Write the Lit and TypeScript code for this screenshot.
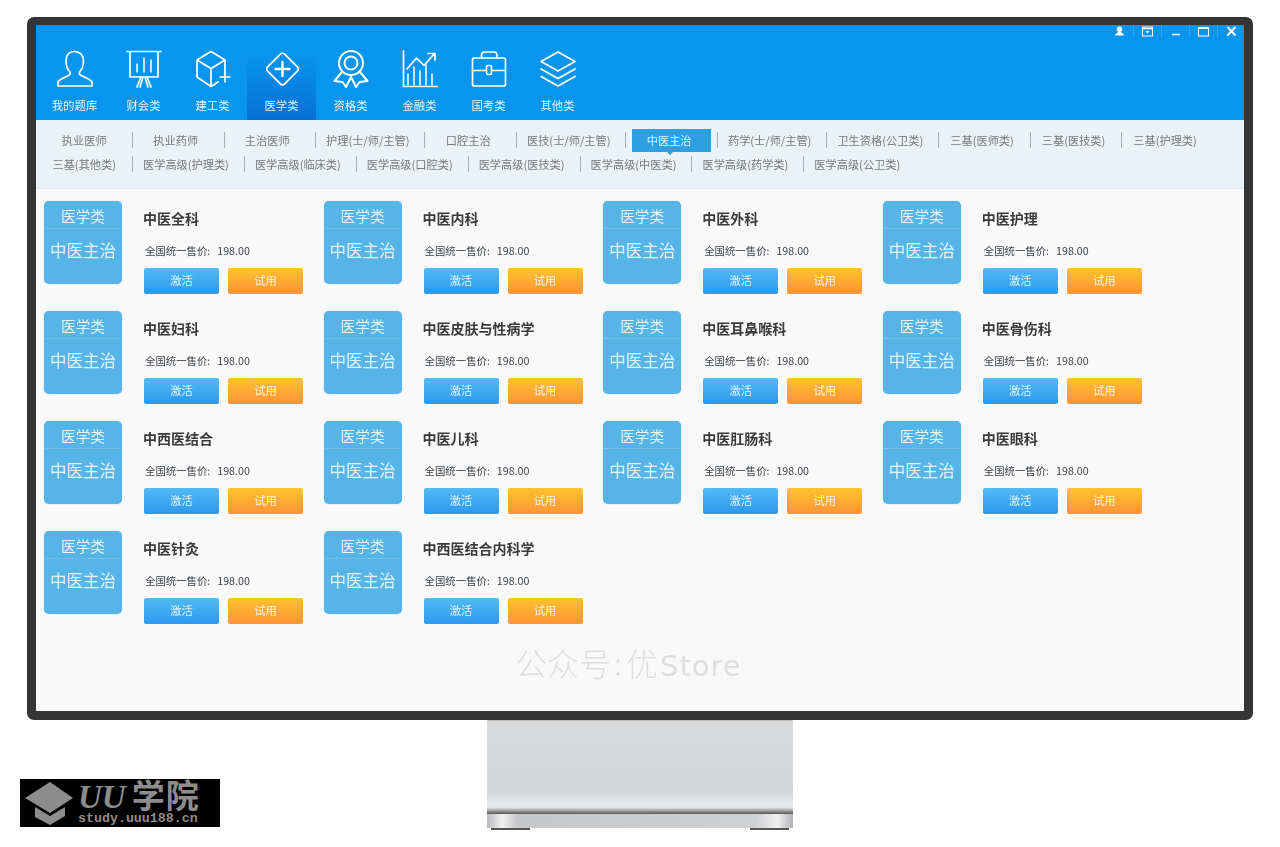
import { LitElement, html, css, svg } from "lit";
import { customElement } from "lit/decorators.js";

const s = (body: unknown) => html`<svg class="ico" viewBox="0 0 36 38" fill="none" stroke="#fff" stroke-width="1.7" stroke-linejoin="round" stroke-linecap="round">${body}</svg>`;

const NAV: [string, unknown][] = [
  ["我的题库", s(svg`<path d="M17.5 1.5C11.5 1.5 9 6 9 11C9 15.5 10.5 19.5 13 22V24C13 26 2.5 28.5 1 32V36H35V32C33.5 28.5 22.5 26 22.5 24V22C25 19.5 26.5 15.5 26.5 11C26.5 6 23.5 1.5 17.5 1.5Z"/>`)],
  ["财会类", s(svg`<path d="M1 1.5H35M4 1.5V27H32V1.5M15 27L11 37M21 27L25 37M19 27L22 37M17 27L14 37"/><path d="M11 14V22M18 8V22M25 10V22" stroke-width="1.5"/>`)],
  ["建工类", s(svg`<path d="M30 24V10L16 1.5L2 10V27L16 36.5L23 32M2 10L16 18.5L30 10M16 18.5V36"/><path d="M25 27H35M30 23V32" stroke-width="1.6"/>`)],
  ["医学类", s(svg`<rect x="6.5" y="7" width="24" height="24" rx="3" transform="rotate(45 18.5 19)"/><path d="M11.5 19H25.5M18.5 12V26" stroke-width="2.4"/>`)],
  ["资格类", s(svg`<circle cx="18" cy="13" r="12" stroke-width="2"/><circle cx="18" cy="13" r="6.5" stroke-width="2"/><path d="M9 22L1.5 31L9.5 32L13 37L18 27L23 37L26.5 32L34.5 31L27 22" stroke-width="2"/>`)],
  ["金融类", s(svg`<path d="M1.5 1V36.5H35"/><path d="M6 35V24M12 35V17M18 35V21M24 35V15M30 35V24" stroke-width="1.5"/><path d="M5 19L14.5 8L22 15.5L32 4M26 3.5H33V10"/>`)],
  ["国考类", s(svg`<rect x="1.5" y="8" width="33" height="28" rx="2"/><path d="M10.5 8V5C10.5 3 12 2 13.5 2H23C25 2 26 3 26 5V8M1.5 20.5H15M21 20.5H34.5"/><rect x="15.5" y="15.5" width="5" height="9" rx="1.5"/>`)],
  ["其他类", s(svg`<path d="M18 2L35 11.5L18 21L1 11.5Z"/><path d="M1 19L18 28.5L35 19M1 26.5L18 36L35 26.5" stroke-width="1.7"/>`)],
];

const SUB = [
  "执业医师", "执业药师", "主治医师", "护理(士/师/主管)", "口腔主治", "医技(士/师/主管)", "中医主治", "药学(士/师/主管)", "卫生资格(公卫类)", "三基(医师类)", "三基(医技类)", "三基(护理类)",
  "三基(其他类)", "医学高级(护理类)", "医学高级(临床类)", "医学高级(口腔类)", "医学高级(医技类)", "医学高级(中医类)", "医学高级(药学类)", "医学高级(公卫类)",
];
const LAST_IN_ROW = new Set(["三基(护理类)", "医学高级(公卫类)"]);

const COURSES = ["中医全科", "中医内科", "中医外科", "中医护理", "中医妇科", "中医皮肤与性病学", "中医耳鼻喉科", "中医骨伤科", "中西医结合", "中医儿科", "中医肛肠科", "中医眼科", "中医针灸", "中西医结合内科学"];

@customElement("app-root")
export class AppRoot extends LitElement {
  static styles = css`
    :host { display: block; position: relative; height: 847px; background: #fff; overflow: hidden; font-family: "Noto Sans CJK SC", "Liberation Sans", sans-serif; }
    .page { display: flex; flex-direction: column; align-items: center; padding-top: 17px; }
    .monitor { box-sizing: border-box; width: 1226px; height: 703px; border: 9px solid #353535; border-top-width: 8px; border-radius: 7px; background: #f9f9f9; display: flex; flex-direction: column; position: relative; overflow: hidden; flex: none; }
    .head { height: 95px; background: #0895ee; display: flex; flex-direction: column; flex: none; }
    .ctl { height: 22px; display: flex; justify-content: flex-end; align-items: flex-start; flex: none; }
    .c { width: 28px; height: 13px; display: flex; align-items: center; justify-content: center; border-right: 1px solid #2ba6f2; box-sizing: border-box; }
    .c:last-child { border-right: none; width: 26px; }
    .c svg { width: 11px; height: 11px; display: block; }
    .nav { display: flex; padding-left: 4px; flex: 1; filter: blur(.3px); }
    .item { width: 69px; display: flex; flex-direction: column; align-items: center; color: rgba(255,255,255,.9); font-size: 11.4px; line-height: 16px; padding-top: 3px; box-sizing: border-box; }
    .item.on { background: linear-gradient(to bottom, #0895ee 10%, #0670d6 100%); }
    .ico { width: 36px; height: 38px; display: block; margin-bottom: 9px; flex: none; }
    .sub { height: 69px; flex: none; box-sizing: border-box; background: #ecf1f6; border-bottom: 1px solid #dbe8f4; padding: 8px 0 0 5.5px; display: flex; flex-wrap: wrap; align-content: flex-start; color: #77797b; font-size: 11.2px; }
    .s { display: flex; align-items: center; height: 24px; filter: blur(.3px); }
    .s span { position: relative; box-sizing: border-box; min-width: 78.5px; height: 23px; line-height: 22px; margin: 0 6px 0 6px; padding: 0 9px 0 4px; text-align: center; white-space: nowrap; }
    .s i { width: 1px; height: 16px; background: #a8acb0; display: block; }
    .s.on span { background: #2e9fe0; color: #e6f4fc; }
    .s.on span::after { content: ""; position: absolute; left: 35px; bottom: -3px; border: 3px solid transparent; border-bottom: none; border-top-color: #2e9fe0; }
    .br { flex-basis: 100%; height: 0; }
    .grid { display: grid; grid-template-columns: repeat(4, 279.6px); grid-auto-rows: 110px; padding: 12px 0 0 8px; }
    .card { display: flex; filter: blur(.3px); }
    .tile { width: 78px; height: 83px; background: #57b4e6; border-radius: 5px; color: #e4f4fc; text-align: center; flex: none; margin-right: 21px; box-shadow: 0 0 1px #7cc4ec; }
    .t1 { height: 27px; line-height: 30px; font-size: 14.7px; border-bottom: 1px solid #72bfe9; margin: 0 1px; }
    .t2 { font-size: 16.5px; line-height: 43px; }
    .info { display: flex; flex-direction: column; align-items: flex-start; }
    .name { font-size: 14px; font-weight: 700; color: #3a3a3a; line-height: 20px; margin-top: 7px; white-space: nowrap; }
    .price { font-size: 10.4px; color: #3c4248; line-height: 16px; margin: 15px 0 9px 2px; white-space: nowrap; }
    .price b { font-weight: 400; font-size: 10.7px; margin-left: 7px; }
    .btns { display: flex; gap: 9px; margin-left: 1px; }
    .btn { width: 75px; height: 26px; line-height: 24px; border-radius: 2px; text-align: center; color: rgba(255,255,255,.85); font-size: 11.3px; }
    .a { background: linear-gradient(#52baf6, #2b98ee); }
    .b { background: linear-gradient(#ffc22e, #ff9338); }
    .wm { position: absolute; left: 479px; top: 617px; font-size: 32px; line-height: 40px; color: #dedede; white-space: nowrap; font-weight: 300; filter: blur(.3px); }
    .wm u { text-decoration: none; margin: 0 4px 0 3px; }
    .wm em { font-style: normal; font-family: "DejaVu Sans", sans-serif; font-size: 29px; letter-spacing: 1px; font-weight: 400; margin-left: 2px; }
    .stand { width: 306px; height: 110px; flex: none; display: flex; flex-direction: column; box-sizing: border-box; border-top: 1px solid #bbb; }
    .neck { flex: 1; background: linear-gradient(to bottom, #d9dadc, #d4d5d7 75%, #e6e7e8 88%, #e4e5e6 93%, #555 100%); }
    .base { height: 14px; flex: none; background: linear-gradient(to right, #b8b9bb, #f2f2f3 5%, #c6c7c9 10%, #d0d1d3 88%, #f0f0f1 95%, #b0b1b3); }
    .feet { display: flex; justify-content: space-between; padding: 0 4px; height: 2px; flex: none; background: #fff; }
    .feet i { width: 39px; background: #555; display: block; }
    .logo { position: absolute; left: 20px; top: 779px; width: 200px; height: 48px; background: #000; color: #8d8d8d; display: flex; align-items: flex-start; }
    .logo svg { width: 52px; height: 46px; flex: none; margin: 1px 0 0 5px; display: block; }
    .lt { display: flex; flex-direction: column; margin-left: 1px; }
    .l1 { font-family: "Liberation Serif", "Noto Sans CJK SC", serif; font-style: italic; font-weight: 700; font-size: 33px; line-height: 30px; height: 33px; white-space: nowrap; }
    .l1 span { font-family: "Noto Sans CJK SC", serif; font-size: 33px; font-style: normal; font-weight: 700; margin-left: 6px; letter-spacing: 1px; }
    .l2 { font-family: "Liberation Mono", monospace; font-weight: 700; font-size: 13.3px; line-height: 14px; white-space: nowrap; }
  `;

  render() {
    return html`
      <div class="page">
        <div class="monitor">
          <div class="head">
            <div class="ctl">
              <div class="c"><svg viewBox="0 0 11 11" fill="#fff"><circle cx="5.5" cy="3.2" r="2.7"/><path d="M1 9.5C1 7.5 3.5 7 4 6H7C7.5 7 10 7.5 10 9.5Z"/></svg></div>
              <div class="c"><svg viewBox="0 0 11 11" fill="none" stroke="#fff"><rect x=".5" y="1" width="10" height="9"/><path d="M.5 2.5H10.5" stroke-width="1.5"/><path d="M3.5 5H7.5L5.5 7.5Z" fill="#fff" stroke="none"/></svg></div>
              <div class="c"><svg viewBox="0 0 11 11"><path d="M2 8.5H10" stroke="#fff" stroke-width="1.6"/></svg></div>
              <div class="c"><svg viewBox="0 0 11 11" fill="none" stroke="#fff"><rect x=".5" y="1.5" width="10" height="8.5"/><path d="M.5 2.2H10.5" stroke-width="1.5"/></svg></div>
              <div class="c"><svg viewBox="0 0 11 11"><path d="M1.5 1L9.5 9.5M9.5 1L1.5 9.5" stroke="#fff" stroke-width="2"/></svg></div>
            </div>
            <div class="nav">
              ${NAV.map(([t, i]) => html`<div class="item ${t === "医学类" ? "on" : ""}">${i}<div>${t}</div></div>`)}
            </div>
          </div>
          <div class="sub">
            ${SUB.map((t) => html`<div class="s ${t === "中医主治" ? "on" : ""}"><span>${t}</span>${LAST_IN_ROW.has(t) ? "" : html`<i></i>`}</div>${LAST_IN_ROW.has(t) ? html`<div class="br"></div>` : ""}`)}
          </div>
          <div class="grid">
            ${COURSES.map((n) => html`
              <div class="card">
                <div class="tile"><div class="t1">医学类</div><div class="t2">中医主治</div></div>
                <div class="info">
                  <div class="name">${n}</div>
                  <div class="price">全国统一售价:<b>198.00</b></div>
                  <div class="btns"><div class="btn a">激活</div><div class="btn b">试用</div></div>
                </div>
              </div>`)}
          </div>
          <div class="wm">公众号<u>:</u>优<em>Store</em></div>
        </div>
        <div class="stand">
          <div class="neck"></div>
          <div class="base"></div>
          <div class="feet"><i></i><i></i></div>
        </div>
      </div>
      <div class="logo">
        <svg viewBox="0 0 52 46" fill="#8d8d8d"><path d="M25 2L48 18L25 33L0 18Z"/><path d="M10 27L25 36L40 27V36L25 45L10 37Z"/></svg>
        <div class="lt"><div class="l1">UU<span>学院</span></div><div class="l2">study.uuu188.cn</div></div>
      </div>
    `;
  }
}
